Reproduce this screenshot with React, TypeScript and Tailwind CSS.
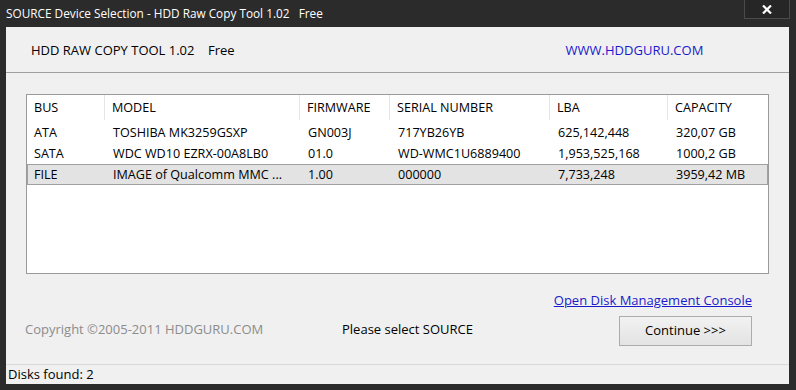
import React from "react";

const font = { fontFamily: '"Open Sans", "Noto Sans", Arial, sans-serif' };

const cols = [
  { name: "BUS", w: "w-[78px]" },
  { name: "MODEL", w: "w-[195px]" },
  { name: "FIRMWARE", w: "w-[90px]" },
  { name: "SERIAL NUMBER", w: "w-[160px]" },
  { name: "LBA", w: "w-[118px]" },
  { name: "CAPACITY", w: "flex-1" },
];

const rows = [
  ["ATA", "TOSHIBA MK3259GSXP", "GN003J", "717YB26YB", "625,142,448", "320,07 GB"],
  ["SATA", "WDC WD10 EZRX-00A8LB0", "01.0", "WD-WMC1U6889400", "1,953,525,168", "1000,2 GB"],
  ["FILE", "IMAGE of Qualcomm MMC ...", "1.00", "000000", "7,733,248", "3959,42 MB"],
];

export default function App() {
  return (
    <div
      className="w-[796px] h-[390px] bg-[#2b2b2b] flex flex-col overflow-hidden"
      style={font}
    >
      {/* Title bar */}
      <div className="h-[27px] flex items-start shrink-0">
        <div className="pl-[6px] pt-[5px] text-white text-[11.8px] leading-[17px] whitespace-pre">
          {"SOURCE Device Selection - HDD Raw Copy Tool 1.02   Free"}
        </div>
        <div className="ml-auto mr-[6px] w-[46px] h-[19px] border border-[#4a4a4a] border-t-0 bg-[#262626] flex items-center justify-center">
          <svg width="10" height="9" viewBox="0 0 10 9">
            <path d="M1 0.5 L9 8.5 M9 0.5 L1 8.5" stroke="#ffffff" strokeWidth="2.2" />
          </svg>
        </div>
      </div>

      {/* Body */}
      <div className="flex-1 ml-[6px] mr-[7px] mb-[6px] bg-[#f0f0f0] flex flex-col">
        {/* Header */}
        <div className="h-[46px] shrink-0 border-b border-[#a0a0a0] flex items-center pt-[2px]">
          <div className="pl-[25px] text-[13px] text-black whitespace-pre">
            {"HDD RAW COPY TOOL 1.02    Free"}
          </div>
          <div className="ml-[331px] text-[13px] text-[#1a1acc]">WWW.HDDGURU.COM</div>
        </div>

        {/* Table */}
        <div className="ml-[20px] mt-[21px] w-[743px] h-[180px] border border-[#9a9a9a] bg-white flex flex-col text-[12.6px] text-black shrink-0">
          <div className="h-[25px] flex">
            {cols.map((c, i) => (
              <div
                key={c.name}
                className={`${c.w} h-full flex items-center pl-[7px] pt-[2px] ${i < cols.length - 1 ? "border-r border-[#e5e5e5]" : ""}`}
              >
                {c.name}
              </div>
            ))}
          </div>
          <div className="pt-[2px] flex flex-col">
            {rows.map((r, ri) => (
              <div
                key={ri}
                className={`h-[21px] flex ${ri === 2 ? "bg-[#e3e3e3] border border-[#a0a0a0]" : "border border-transparent"}`}
              >
                {r.map((cell, ci) => (
                  <div
                    key={ci}
                    className={`${cols[ci].w} ${ci === 0 ? "pl-[6px]" : "pl-[7px]"} pt-[1px] flex items-center whitespace-nowrap overflow-hidden`}
                  >
                    {cell}
                  </div>
                ))}
              </div>
            ))}
          </div>
        </div>

        {/* Bottom area */}
        <div className="flex-1 flex items-end pb-[18px]">
          <div className="pl-[19px] pb-[7px] text-[13px] text-[#8c8c8c] w-[336px]">
            Copyright ©2005-2011 HDDGURU.COM
          </div>
          <div className="pb-[7px] text-[13px] text-black">Please select SOURCE</div>
          <div className="ml-auto mr-[37px] flex flex-col items-end">
            <div className="text-[13px] text-[#1a1acc] underline leading-[18px]">
              Open Disk Management Console
            </div>
            <div className="mt-[7px] w-[133px] h-[30px] border border-[#acacac] bg-gradient-to-b from-[#f2f2f2] to-[#e3e3e3] flex items-center justify-center text-[13px] text-black">
              Continue &gt;&gt;&gt;
            </div>
          </div>
        </div>

        {/* Status bar */}
        <div className="h-[20px] shrink-0 border-t border-[#d9d9d9] flex items-center pl-[2px] text-[13px] text-black">
          Disks found: 2
        </div>
      </div>
    </div>
  );
}
